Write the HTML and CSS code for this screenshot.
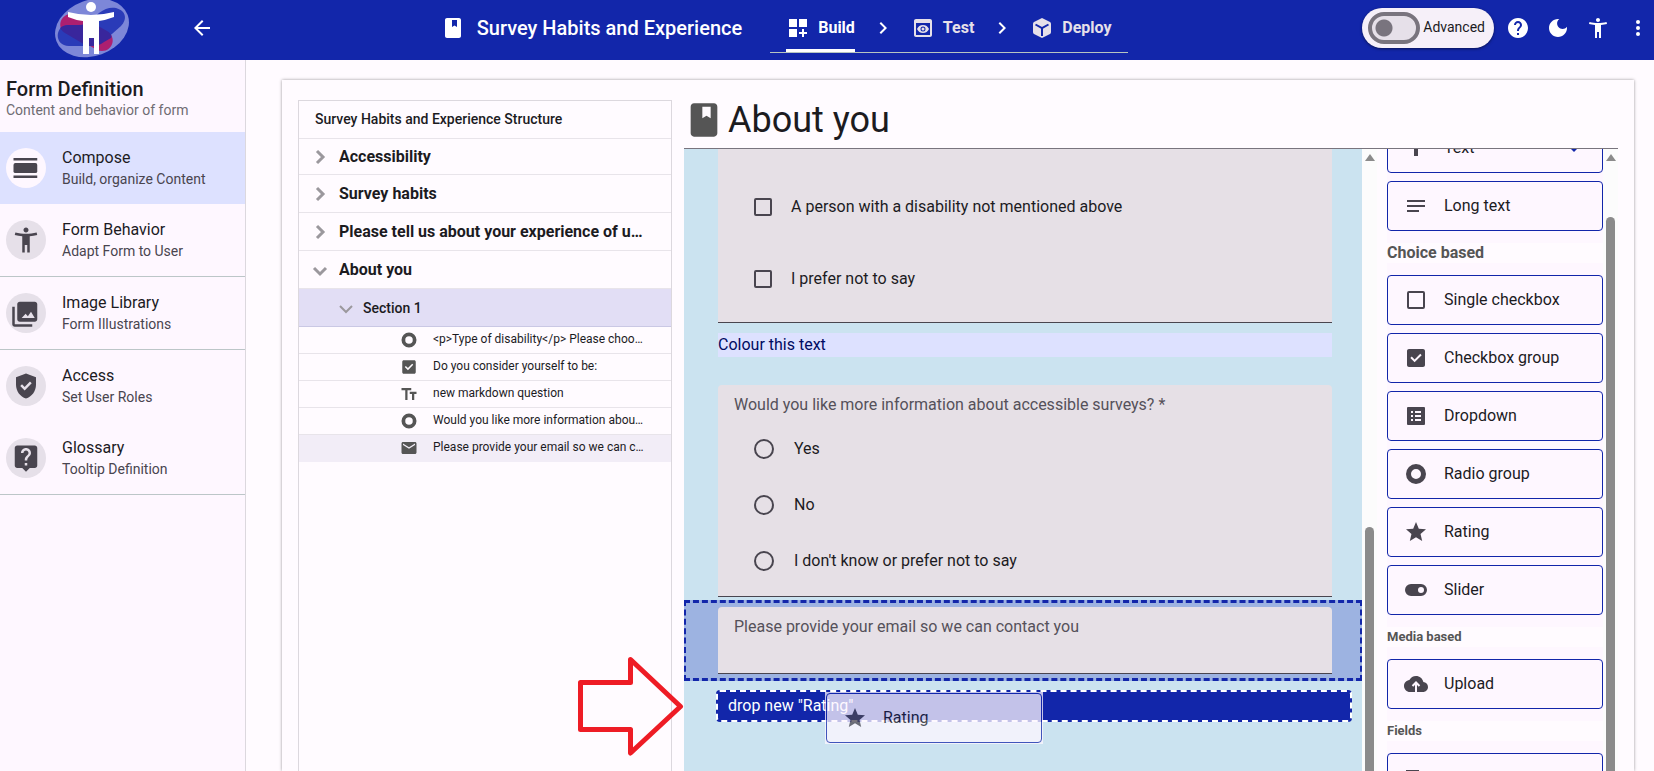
FILE: index.html
```html
<!DOCTYPE html>
<html lang="en">
<head>
<meta charset="utf-8">
<meta name="viewport" content="width=device-width, initial-scale=1">
<title>Survey Habits and Experience</title>
<link rel="stylesheet" href="styles.css">
</head>
<body>
<svg class="sprite" aria-hidden="true">
  <symbol id="i-book" viewBox="0 0 24 24"><path fill-rule="evenodd" d="M6 2h12c1.100 0 2 .9 2 2v16c0 1.100-.9 2-2 2H6c-1.100 0-2-.9-2-2V4c0-1.100.9-2 2-2zm5 2v7l2.500-1.500L16 11V4z"/></symbol>
  <symbol id="i-person" viewBox="0 0 24 24"><path d="M20.500 6c-2.610.7-5.670 1-8.500 1s-5.890-.3-8.500-1L3 8c1.860.5 4 .83 6 1v13h2v-6h2v6h2V9c2-.17 4.140-.5 6-1l-.5-2zM12 6c1.100 0 2-.9 2-2s-.9-2-2-2-2 .9-2 2 .9 2 2 2z"/></symbol>
  <symbol id="i-radio" viewBox="0 0 24 24"><circle cx="12" cy="12" r="7.500" fill="none" stroke="currentColor" stroke-width="5"/></symbol>
  <symbol id="i-check" viewBox="0 0 24 24"><path fill-rule="evenodd" d="M5 3h14c1.100 0 2 .9 2 2v14c0 1.100-.9 2-2 2H5c-1.100 0-2-.9-2-2V5c0-1.100.9-2 2-2zm5.600 13.200l7.050-7.050-1.400-1.400-5.650 5.650-2.850-2.850-1.400 1.400z"/></symbol>
  <symbol id="i-star" viewBox="0 0 24 24"><path d="M12 17.270L18.180 21l-1.640-7.030L22 9.240l-7.190-.61L12 2 9.190 8.630 2 9.240l5.460 4.730L5.820 21z"/></symbol>
  <symbol id="i-right" viewBox="0 0 24 24"><path d="M10 6L8.590 7.410 13.170 12l-4.580 4.590L10 18l6-6z"/></symbol>
</svg>

<header class="topbar">
  <svg class="logo" viewBox="0 0 76 60" role="img" aria-label="Accessible surveys">
    <ellipse cx="38" cy="28" rx="38" ry="28" transform="rotate(-20 38 28)" fill="#7d87d8"/>
    <path d="M17 14c4 0 6 2 10 4l26 13c10 6 6 20-5 20-4 0-7-2-10-4L11 33C2 27 7 14 17 14z" fill="#ad1f70"/>
    <path d="M15 25h10c9 0 13-6 20-12 6-5 12-6 17-5 11 3 11 12 5 18L50 41c-5 4-9 5-15 5H15C0 46 0 25 15 25z" fill="#2a3bb8"/>
    <path d="M15 25h10c7 0 9-2 12-3l16 9c5 3 5 6 4 7l-7 4c-4 3-8 4-14 4h-3L11 33c-3-2-5-5-5-5 2-2 5-3 9-3z" fill="#39269c"/>
    <circle cx="37" cy="7" r="5"/>
    <path d="M14 12q23 6 46 0v5q-8 3-15 4v33h-5V38h-5v16h-6V21q-8-1-15-4z"/>
  </svg>
  <button class="icon-btn back" aria-label="Back"><svg class="ic" viewBox="0 0 24 24"><path d="M20 11H7.830l5.590-5.590L12 4l-8 8 8 8 1.410-1.410L7.830 13H20z"/></svg></button>
  <div class="top-center">
    <svg class="ic"><use href="#i-book"/></svg>
    <h1 class="doc-title">Survey Habits and Experience</h1>
    <nav class="steps">
      <a class="step active" href="#build"><svg class="ic" viewBox="0 0 24 24"><path d="M3 11h8V3H3zm10-8v8h8V3zM3 21h8v-8H3zm15-8h-2v3h-3v2h3v3h2v-3h3v-2h-3z"/></svg>Build</a>
      <svg class="ic sep"><use href="#i-right"/></svg>
      <a class="step" href="#test"><svg class="ic" viewBox="0 0 24 24"><path fill-rule="evenodd" d="M19 3H5c-1.110 0-2 .9-2 2v14c0 1.100.89 2 2 2h14c1.100 0 2-.9 2-2V5c0-1.100-.89-2-2-2zm0 16H5V7h14z"/><path fill-rule="evenodd" d="M12 9c-2.730 0-5.060 1.660-6 4 .94 2.340 3.270 4 6 4s5.060-1.660 6-4c-.94-2.340-3.270-4-6-4zm0 6.500a2.500 2.500 0 1 1 0-5 2.500 2.500 0 0 1 0 5z"/><circle cx="12" cy="13" r="1.500"/></svg>Test</a>
      <svg class="ic sep"><use href="#i-right"/></svg>
      <a class="step" href="#deploy"><svg class="ic" viewBox="0 0 24 24"><path d="M12 2l8 4q1 .6 1 2v8q0 1.400-1 2l-8 4-8-4q-1-.6-1-2V8q0-1.400 1-2z"/><path d="M5.500 8.500L12 12.200l6.500-3.700M12 12.200V20" fill="none" stroke="#1226aa" stroke-width="2"/></svg>Deploy</a>
    </nav>
  </div>
  <div class="top-actions">
    <label class="advanced"><input class="switch" type="checkbox" role="switch">Advanced</label>
    <button class="icon-btn" aria-label="Help"><svg class="ic" viewBox="0 0 24 24"><path d="M12 2C6.480 2 2 6.480 2 12s4.480 10 10 10 10-4.480 10-10S17.520 2 12 2zm1 17h-2v-2h2v2zm2.070-7.750l-.9.920C13.450 12.900 13 13.500 13 15h-2v-.5c0-1.100.45-2.100 1.170-2.830l1.240-1.260c.37-.36.59-.86.59-1.410 0-1.100-.9-2-2-2s-2 .9-2 2H8c0-2.210 1.790-4 4-4s4 1.790 4 4c0 .88-.36 1.680-.93 2.250z"/></svg></button>
    <button class="icon-btn" aria-label="Dark mode"><svg class="ic" viewBox="0 0 24 24"><path d="M12 3c-4.970 0-9 4.030-9 9s4.030 9 9 9 9-4.030 9-9c0-.46-.04-.92-.1-1.360-.98 1.370-2.580 2.260-4.400 2.260-2.980 0-5.400-2.420-5.400-5.400 0-1.810.89-3.420 2.260-4.400C12.920 3.040 12.460 3 12 3z"/></svg></button>
    <button class="icon-btn" aria-label="Accessibility"><svg class="ic"><use href="#i-person"/></svg></button>
    <button class="icon-btn overflow" aria-label="More"><svg class="ic" viewBox="0 0 24 24"><circle cx="12" cy="6" r="2"/><circle cx="12" cy="12" r="2"/><circle cx="12" cy="18" r="2"/></svg></button>
  </div>
</header>

<div class="page">
  <aside class="sidebar">
    <div class="side-head"><h2>Form Definition</h2><p>Content and behavior of form</p></div>
    <nav>
      <a class="side-item current" href="#compose"><span class="disc"><svg viewBox="0 0 24 24"><path d="M2 4h19v2H2zM2 18h19v2H2z"/><rect x="2" y="8" width="19" height="8" rx="1.500"/></svg></span><span class="side-text"><b>Compose</b><small>Build, organize Content</small></span></a>
      <a class="side-item" href="#behavior"><span class="disc"><svg><use href="#i-person"/></svg></span><span class="side-text"><b>Form Behavior</b><small>Adapt Form to User</small></span></a>
      <a class="side-item ruled" href="#images"><span class="disc"><svg viewBox="0 0 24 24"><path fill-rule="evenodd" d="M8 2h12c1.100 0 2 .9 2 2v12c0 1.100-.9 2-2 2H8c-1.100 0-2-.9-2-2V4c0-1.100.9-2 2-2zm1.500 13h10.500l-3-5-2.500 3.500-1.800-2zM2 6v14c0 1.100.9 2 2 2h14v-2H4V6z" transform="translate(-1 1)"/></svg></span><span class="side-text"><b>Image Library</b><small>Form Illustrations</small></span></a>
      <a class="side-item ruled" href="#access"><span class="disc"><svg viewBox="0 0 24 24"><path d="M12 2L4 5v6.090c0 5.050 3.410 9.760 8 10.910 4.590-1.150 8-5.860 8-10.910V5l-8-3zm-1.060 13.540L7.400 12l1.410-1.410 2.120 2.120 4.240-4.240 1.410 1.410-5.640 5.660z"/></svg></span><span class="side-text"><b>Access</b><small>Set User Roles</small></span></a>
      <a class="side-item last" href="#glossary"><span class="disc"><svg viewBox="0 0 24 24"><path d="M19 2H5c-1.110 0-2 .9-2 2v14c0 1.100.89 2 2 2h4l3 3 3-3h4c1.100 0 2-.9 2-2V4c0-1.100-.9-2-2-2zm-6 16h-2v-2h2v2zm2.070-7.750l-.9.920C13.450 11.900 13 12.500 13 14h-2v-.5c0-1.100.45-2.100 1.170-2.830l1.240-1.260c.37-.36.59-.86.59-1.410 0-1.100-.9-2-2-2s-2 .9-2 2H8c0-2.210 1.790-4 4-4s4 1.790 4 4c0 .88-.36 1.680-.93 2.250z"/></svg></span><span class="side-text"><b>Glossary</b><small>Tooltip Definition</small></span></a>
    </nav>
  </aside>

  <main class="sheet">
    <section class="tree" aria-label="Structure">
      <h2 class="tree-head">Survey Habits and Experience Structure</h2>
      <button class="tree-row first"><svg class="chev" viewBox="0 0 24 24"><path d="M9 6l6 6-6 6"/></svg><span>Accessibility</span></button>
      <button class="tree-row"><svg class="chev" viewBox="0 0 24 24"><path d="M9 6l6 6-6 6"/></svg><span>Survey habits</span></button>
      <button class="tree-row"><svg class="chev" viewBox="0 0 24 24"><path d="M9 6l6 6-6 6"/></svg><span>Please tell us about your experience of using surveys</span></button>
      <button class="tree-row"><svg class="chev" viewBox="0 0 24 24"><path d="M6 10l6 6 6-6"/></svg><span>About you</span></button>
      <button class="tree-row section"><svg class="chev thin" viewBox="0 0 24 24"><path d="M6 10l6 6 6-6"/></svg><span>Section 1</span></button>
      <button class="tree-leaf"><svg><use href="#i-radio"/></svg><span>&lt;p&gt;Type of disability&lt;/p&gt; Please choose all that apply</span></button>
      <button class="tree-leaf"><svg><use href="#i-check"/></svg><span>Do you consider yourself to be:</span></button>
      <button class="tree-leaf"><svg viewBox="0 0 24 24"><path d="M2 4v3h5v13h3V7h5V4zm20 5h-9v3h3v8h3v-8h3z"/></svg><span>new markdown question</span></button>
      <button class="tree-leaf"><svg><use href="#i-radio"/></svg><span>Would you like more information about accessible surveys?</span></button>
      <button class="tree-leaf picked"><svg viewBox="0 0 24 24"><path d="M20 4H4c-1.100 0-2 .9-2 2v12c0 1.100.9 2 2 2h16c1.100 0 2-.9 2-2V6c0-1.100-.9-2-2-2zm0 4l-8 5-8-5V6l8 5 8-5z"/></svg><span>Please provide your email so we can contact you</span></button>
    </section>

    <section class="editor">
      <div class="editor-head"><svg><use href="#i-book"/></svg><h2>About you</h2></div>
      <div class="editor-body">
        <form class="preview">
          <fieldset class="question checks">
            <label class="option"><input class="box" type="checkbox">A person with a disability not mentioned above</label>
            <label class="option"><input class="box" type="checkbox">I prefer not to say</label>
          </fieldset>
          <p class="note">Colour this text</p>
          <fieldset class="question radios">
            <legend class="q-label">Would you like more information about accessible surveys? *</legend>
            <label class="option"><input class="dot" type="radio" name="more">Yes</label>
            <label class="option"><input class="dot" type="radio" name="more">No</label>
            <label class="option"><input class="dot" type="radio" name="more">I don't know or prefer not to say</label>
          </fieldset>
          <div class="selected">
            <div class="question email">
              <label class="q-label" for="email">Please provide your email so we can contact you</label>
              <input class="email-input" id="email" type="email">
            </div>
          </div>
          <div class="drop">drop new "Rating"
            <div class="ghost"><div class="tool"><svg class="ic"><use href="#i-star"/></svg>Rating</div></div>
          </div>
        </form>
        <div class="scroll preview-scroll" aria-hidden="true"><i class="up"></i><i class="thumb"></i></div>
        <div class="palette-wrap">
          <div class="palette">
            <button class="tool"><svg class="ic" viewBox="0 0 24 24"><path d="M5 4v3h5v13h4V7h5V4z"/></svg><span>Text</span><svg class="ic more" viewBox="0 0 24 24"><path d="M7 11l5 5 5-5z"/></svg></button>
            <button class="tool"><svg class="ic" viewBox="0 0 24 24"><path d="M3 18h12v-2H3zM3 6v2h18V6zm0 7h18v-2H3z"/></svg>Long text</button>
            <h3 class="group big">Choice based</h3>
            <button class="tool"><svg class="ic" viewBox="0 0 24 24"><rect x="4" y="4" width="16" height="16" rx="1" fill="none" stroke="currentColor" stroke-width="2"/></svg>Single checkbox</button>
            <button class="tool"><svg class="ic"><use href="#i-check"/></svg>Checkbox group</button>
            <button class="tool"><svg class="ic" viewBox="0 0 24 24"><path fill-rule="evenodd" d="M4 3h16q1 0 1 1v16q0 1-1 1H4q-1 0-1-1V4q0-1 1-1zm3 4v2h2V7zm4 0v2h6V7zm-4 4v2h2v-2zm4 0v2h6v-2zm-4 4v2h2v-2zm4 0v2h6v-2z"/></svg>Dropdown</button>
            <button class="tool"><svg class="ic"><use href="#i-radio"/></svg>Radio group</button>
            <button class="tool"><svg class="ic"><use href="#i-star"/></svg>Rating</button>
            <button class="tool"><svg class="ic" viewBox="0 0 24 24"><path fill-rule="evenodd" d="M7 6h10a6 6 0 0 1 0 12H7A6 6 0 0 1 7 6zm10 3a3 3 0 1 0 0 6 3 3 0 0 0 0-6z"/></svg>Slider</button>
            <h3 class="group">Media based</h3>
            <button class="tool"><svg class="ic" viewBox="0 0 24 24"><path d="M19.350 10.040C18.670 6.590 15.640 4 12 4 9.110 4 6.600 5.640 5.350 8.040 2.340 8.360 0 10.910 0 14c0 3.310 2.690 6 6 6h13c2.760 0 5-2.240 5-5 0-2.640-2.050-4.780-4.650-4.960z"/><path d="M12 20v-9M8.500 14l3.500-3.500 3.500 3.500" fill="none" stroke="#fef7ff" stroke-width="2"/></svg>Upload</button>
            <h3 class="group">Fields</h3>
            <button class="tool" aria-label="Field"><svg class="ic" viewBox="0 0 24 24"><path d="M2 4h13v3H2zm0 6h20v3H2zm0 6h13v3H2z"/></svg></button>
          </div>
          <div class="scroll palette-scroll" aria-hidden="true"><i class="up"></i><i class="thumb"></i></div>
        </div>
      </div>
      <svg class="pointer" viewBox="0 0 106 100" aria-hidden="true"><path d="M2.500 26.500h50v-23l50 47-50 46.500V73.500h-50z" fill="none" stroke="#ee1c25" stroke-width="5" stroke-linejoin="round"/></svg>
    </section>
  </main>
</div>
</body>
</html>
```
FILE: styles.css
```css
* { box-sizing: border-box; }
body {
  margin: 0;
  height: 100vh;
  display: flex;
  flex-direction: column;
  overflow: hidden;
  font: 16px/24px Roboto, sans-serif;
  color: #1c1b1f;
  background: #fffbff;
}
h1, h2, h3, p { margin: 0; font-weight: 400; }
button { font: inherit; color: inherit; border: 0; background: none; padding: 0; text-align: left; }
a { color: inherit; text-decoration: none; }
fieldset { margin: 0; padding: 0; border: 0; min-width: 0; }
svg { fill: currentColor; flex: none; }
.sprite { position: absolute; width: 0; height: 0; }
.ic { width: 24px; height: 24px; display: block; }

/* Top bar */
.topbar {
  flex: none;
  height: 60px;
  padding: 0 0 4px 54px;
  display: flex;
  align-items: center;
  color: #fff;
  background: #1226aa;
}
.logo { width: 76px; height: 60px; align-self: flex-start; }
.icon-btn { width: 40px; height: 40px; display: grid; place-items: center; flex: none; }
.icon-btn.overflow { width: 32px; margin-left: 4px; }
.back { margin-left: 52px; }
.top-center { flex: 1; padding-right: 16px; display: flex; align-items: center; justify-content: center; }
.doc-title { margin: 0 28px 0 12px; font-size: 20px; font-weight: 500; white-space: nowrap; }
.steps {
  height: 50px;
  padding: 0 16px;
  display: flex;
  align-items: center;
  gap: 16px;
  border-bottom: 1px solid #b6c5c0;
}
.step { height: 49px; padding-top: 4px; display: flex; align-items: center; gap: 8px; font-weight: 700; color: #e6e0e9; border-bottom: 3px solid transparent; }
.step.active { color: #fff; border-color: #fff; }
.sep { margin-top: 1px; }
.top-actions { display: flex; align-items: center; }
.advanced {
  height: 40px;
  margin-right: 4px;
  padding: 0 9px 2px 6px;
  display: flex;
  align-items: center;
  gap: 3px;
  font-size: 14px;
  color: #1c1b1f;
  background: #f6f0f9;
  border-radius: 20px;
  box-shadow: 0 1px 3px rgba(0, 0, 0, .5);
}
.switch {
  appearance: none;
  width: 52px;
  height: 32px;
  margin: 2px 0 0;
  border: 4px solid #79747e;
  border-radius: 16px;
  background: radial-gradient(circle at 12px 12px, #79747e 8px, #e6e0e9 9px);
}

/* Left navigation */
.page { flex: 1; min-height: 0; display: flex; }
.sidebar { width: 246px; flex: none; background: #fef7ff; border-right: 1px solid #dcd8de; }
.side-head { padding: 17px 6px 13px; }
.side-head h2 { font-size: 20px; font-weight: 500; line-height: 24px; }
.side-head p { font-size: 14px; line-height: 18px; color: #6f6c73; }
.side-item { height: 72px; padding: 0 6px; display: flex; align-items: center; gap: 16px; }
.side-item.current { background: #dde1ff; }
.side-item.ruled { height: 73px; border-top: 1px solid #bcc6c8; }
.side-item.last { height: 73px; border-bottom: 1px solid #bcc6c8; }
.disc { width: 40px; height: 40px; border-radius: 50%; display: grid; place-items: center; background: #e6e0e9; color: #49454f; }
.current .disc { background: #fef7ff; }
.disc svg { width: 30px; height: 30px; }
.side-text { display: flex; flex-direction: column; }
.side-text b { font-weight: 400; line-height: 22px; }
.side-text small { font-size: 14px; line-height: 20px; color: #49454f; }

/* Working sheet */
.sheet {
  flex: 1;
  min-width: 0;
  margin: 20px 20px 0 36px;
  padding: 20px 16px 0;
  display: flex;
  gap: 12px;
  box-shadow: 0 0 3px rgba(0, 0, 0, .4);
}
.tree { width: 374px; flex: none; border: 1px solid #dcd8de; border-bottom: 0; }
.tree-head { height: 38px; padding: 0 16px; font-size: 14px; font-weight: 500; line-height: 36px; border-bottom: 1px solid #e8e4ea; }
.tree-row {
  width: 100%;
  height: 38px;
  padding: 0 28px 0 9px;
  display: flex;
  align-items: center;
  gap: 7px;
  font-weight: 700;
  border-bottom: 1px solid #e8e4ea;
}
.tree-row.first { height: 36px; }
.tree-row span, .tree-leaf span { overflow: hidden; text-overflow: ellipsis; white-space: nowrap; }
.chev { width: 24px; height: 24px; fill: none; stroke: #9b989d; stroke-width: 3; }
.chev.thin { stroke-width: 2; }
.tree-row.section { padding-left: 35px; gap: 5px; font-size: 14px; font-weight: 500; background: #e2def5; border-color: #cac8e4; }
.tree-leaf {
  width: 100%;
  height: 27px;
  padding: 0 24px 2px 101px;
  display: flex;
  align-items: center;
  gap: 15px;
  font-size: 12px;
  border-bottom: 1px solid #e8e4ea;
}
.tree-leaf svg { width: 18px; height: 18px; margin-top: 2px; color: #555; }
.tree-leaf.picked { background: #f2edf7; border-color: #f2edf7; }

/* Editor */
.editor { flex: 1; min-width: 0; position: relative; display: flex; flex-direction: column; }
.editor-head { height: 49px; padding-bottom: 9px; display: flex; align-items: center; border-bottom: 1px solid #79747e; }
.editor-head svg { width: 40px; height: 40px; color: #555; }
.editor-head h2 { margin-left: 4px; font-size: 36px; line-height: 40px; }
.editor-body { flex: 1; min-height: 0; display: flex; overflow: hidden; }
.preview { flex: 1; min-width: 0; background: #cbe3f0; }
.question { margin: 0 30px 0 34px; background: #e6e0e6; border-bottom: 1px solid #49454f; }
.option { display: flex; align-items: center; }
.checks { padding: 22px 36px 7px; }
.checks .option { height: 72px; gap: 19px; }
.box { appearance: none; width: 18px; height: 18px; margin: 0; border: 2px solid #49454f; border-radius: 2px; }
.note { margin: 10px 30px 28px 34px; line-height: 24px; color: #000b62; background: #dde1ff; }
.radios { padding: 0 36px 7px; border-radius: 4px 4px 0 0; }
.q-label { display: block; color: #55515a; }
.radios .q-label { float: left; width: 100%; margin: 8px 0 4px -20px; padding: 0; }
.radios .option { clear: both; height: 56px; gap: 20px; }
.dot { appearance: none; width: 20px; height: 20px; margin: 0; border: 2px solid #49454f; border-radius: 50%; }
.selected { margin-top: 3px; padding: 4px 0; background: #9db3e1; border: 3px dashed #1226aa; border-width: 3px 2px; }
.email { margin: 0 28px 0 32px; padding: 8px 16px; border-radius: 4px 4px 0 0; }
.email-input { display: block; width: 100%; height: 26px; padding: 0; border: 0; background: none; font: inherit; }
.drop {
  position: relative;
  height: 32px;
  margin: 9px 10px 0 32px;
  padding-left: 10px;
  line-height: 27px;
  color: #fff;
  background: #1226aa;
  border: 2px dashed #fff;
  border-radius: 4px;
}
.ghost { position: absolute; left: 107px; top: 0; width: 218px; padding: 1px; background: #fef7ff; opacity: .75; line-height: 24px; }

/* Scroll tracks */
.scroll { width: 15px; flex: none; padding: 5px 3px 0; display: flex; flex-direction: column; align-items: center; background: #fcfcfc; }
.up { border: 5px solid transparent; border-top: 0; border-bottom: 7px solid #8b8b8b; }
.thumb { flex: 1; width: 9px; border-radius: 5px 5px 0 0; background: #8b8b8b; }
.preview-scroll { margin-right: 10px; }
.preview-scroll .thumb { margin-top: 366px; }
.palette-scroll .thumb { margin-top: 56px; }

/* Component palette */
.palette-wrap { display: flex; }
.palette { width: 216px; margin-top: -26px; display: flex; flex-direction: column; gap: 8px; background: #fef7ff; }
.tool {
  width: 100%;
  height: 50px;
  flex: none;
  padding: 0 16px;
  display: flex;
  align-items: center;
  gap: 16px;
  color: #1c1b1f;
  border: 1px solid #1226aa;
  border-radius: 4px;
  background: #fef7ff;
}
.tool .ic { color: #49454f; }
.tool .more { margin-left: auto; color: #1226aa; }
.group { margin: 4px 0; font-size: 13px; font-weight: 700; line-height: 20px; color: #555; background: #fffbff; }
.group.big { font-size: 16px; }

/* Callout arrow lies over the tree and the preview */
.pointer { position: absolute; left: -106px; top: 556px; width: 106px; height: 100px; }
```
